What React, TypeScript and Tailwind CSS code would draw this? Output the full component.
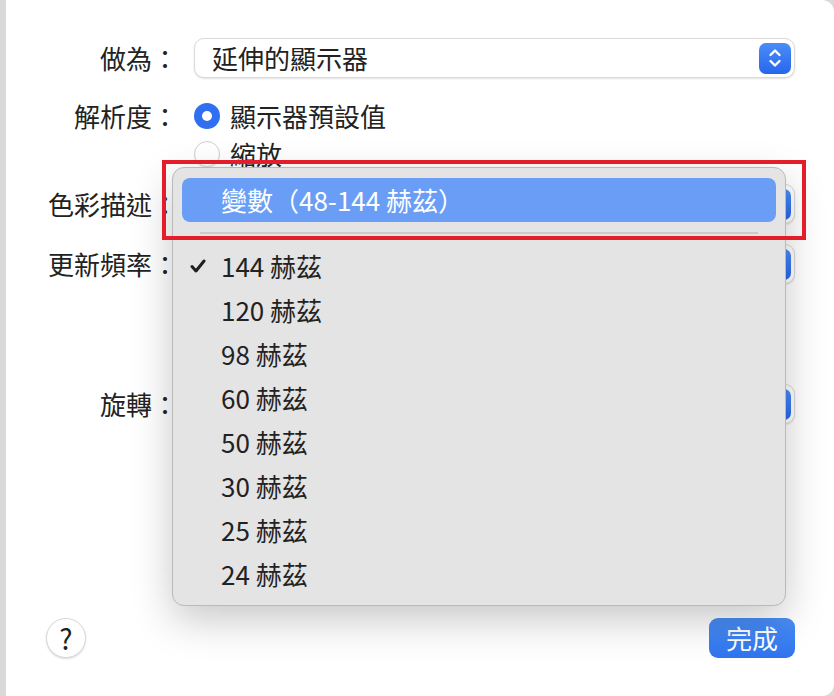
import React from 'react';

const rates = ['120', '98', '60', '50', '30', '25', '24'];

function Stepper() {
  return (
    <div className="w-[32px] h-[31px] rounded-[7px] bg-linear-to-b from-[#4a8cf8] to-[#2766ec] flex items-center justify-center">
      <svg width="14" height="22" viewBox="0 0 14 22" fill="none" stroke="white" strokeWidth="2.4" strokeLinecap="round" strokeLinejoin="round">
        <path d="M2.5 8 L7 3.5 L11.5 8" />
        <path d="M2.5 14 L7 18.5 L11.5 14" />
      </svg>
    </div>
  );
}

// text is optional: the popups behind the open menu show only their edge
function Popup({ text }: { text?: string }) {
  return (
    <div className="h-[40px] rounded-[10px] bg-white border border-[#dadada] shadow-[0_1px_2px_rgba(0,0,0,0.12)] flex items-center justify-between pl-[17px] pr-[3px]">
      <span className="leading-none">{text}</span>
      <Stepper />
    </div>
  );
}

function Row({ label, children, className }: { label: string; children: React.ReactNode; className?: string }) {
  return (
    <div className={'flex items-start pr-[39px] ' + (className ?? '')}>
      <div className="w-[172px] shrink-0 h-[40px] flex items-center justify-end leading-none">{label}</div>
      <div className="ml-[16px] flex-1">{children}</div>
    </div>
  );
}

function Check() {
  return (
    <svg width="16" height="14" viewBox="0 0 16 14" fill="none" stroke="#1f1f1f" strokeWidth="3" strokeLinecap="round" strokeLinejoin="round">
      <path d="M2 7.5 L6 12 L14 2" />
    </svg>
  );
}

export default function App() {
  return (
    <div className="relative w-[834px] h-[696px] overflow-hidden bg-[#d9d9d9] pl-[6px] text-[26px] text-[#222222] font-['Noto_Sans_CJK_TC','Noto_Sans',sans-serif]">
      {/* dialog sheet */}
      <div className="h-full bg-white rounded-r-[12px] flex flex-col pt-[38px]">
        <Row label="做為：">
          <Popup text="延伸的顯示器" />
        </Row>

        <div className="flex pr-[39px] mt-[25px]">
          <div className="w-[172px] shrink-0 h-[26px] flex items-center justify-end leading-none">解析度：</div>
          <div className="ml-[16px] flex flex-col gap-[12px]">
            <div className="flex items-center h-[26px] gap-[10px]">
              <div className="w-[26px] h-[26px] rounded-full bg-[#2f6ff0] flex items-center justify-center">
                <div className="w-[10px] h-[10px] rounded-full bg-white" />
              </div>
              <span className="leading-none">顯示器預設值</span>
            </div>
            <div className="flex items-center h-[26px] gap-[10px]">
              <div className="w-[26px] h-[26px] rounded-full bg-white border border-[#cfcfcf] shadow-[0_1px_1px_rgba(0,0,0,0.08)]" />
              <span className="leading-none">縮放</span>
            </div>
          </div>
        </div>

        <Row label="色彩描述：" className="mt-[17px]">
          <Popup />
        </Row>
        <Row label="更新頻率：" className="mt-[20px]">
          <Popup />
        </Row>
        <Row label="旋轉：" className="mt-[100px]">
          <Popup />
        </Row>

        <div className="mt-auto flex items-center justify-between pl-[40px] pr-[39px] pb-[38px]">
          <div className="w-[40px] h-[40px] rounded-full bg-white border border-[#d9d9d9] shadow-[0_1px_2px_rgba(0,0,0,0.15)] flex items-center justify-center leading-none text-[28px]">
            ?
          </div>
          <div className="w-[86px] h-[40px] rounded-[9px] bg-linear-to-b from-[#4a8ff8] to-[#2f74ef] text-white flex items-center justify-center leading-none">
            完成
          </div>
        </div>
      </div>

      {/* popup menu */}
      <div className="absolute left-[172px] top-[167px] w-[614px] h-[439px] rounded-[12px] bg-[#e4e4e4] border border-[#b9b9b9] shadow-[0_14px_40px_rgba(0,0,0,0.22)] px-[9px] pt-[10px]">
        <div className="h-[44px] rounded-[8px] bg-[#6a9ef6] text-white flex items-center pl-[39px] leading-none">
          變數（48-144 赫茲）
        </div>
        <div className="h-[22px] flex items-center px-[18px]">
          <div className="h-[2px] w-full bg-[#cacaca]" />
        </div>
        <div className="relative h-[44px] flex items-center pl-[39px] leading-none">
          <div className="absolute left-[8px] top-[15px]">
            <Check />
          </div>
          144 赫茲
        </div>
        {rates.map((r) => (
          <div key={r} className="h-[44px] flex items-center pl-[39px] leading-none">
            {r} 赫茲
          </div>
        ))}
      </div>

      {/* annotation */}
      <div className="absolute left-[162px] top-[160px] w-[644px] h-[80px] border-[4px] border-[#e31e2a]" />
    </div>
  );
}
